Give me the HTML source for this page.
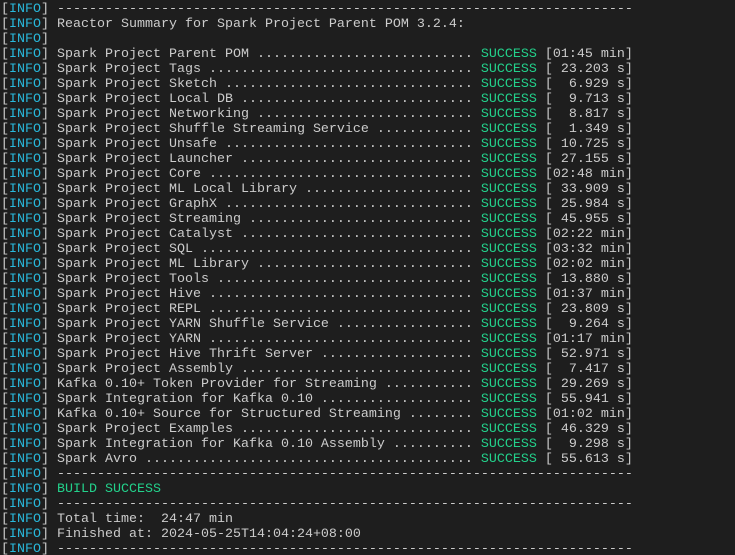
<!DOCTYPE html>
<html><head><meta charset="utf-8"><style>
html,body{margin:0;padding:0;background:#1e1e1e;width:735px;height:555px;overflow:hidden}
pre{margin:0;padding:2px 0 0 1px;font-family:"Liberation Mono",monospace;font-size:13.33px;line-height:15px;color:#cccccc;white-space:pre}
.i{color:#29b8db}.g{color:#23d18b}
</style></head><body><pre>[<span class="i">INFO</span>] ------------------------------------------------------------------------
[<span class="i">INFO</span>] Reactor Summary for Spark Project Parent POM 3.2.4:
[<span class="i">INFO</span>]
[<span class="i">INFO</span>] Spark Project Parent POM ........................... <span class="g">SUCCESS</span> [01:45 min]
[<span class="i">INFO</span>] Spark Project Tags ................................. <span class="g">SUCCESS</span> [ 23.203 s]
[<span class="i">INFO</span>] Spark Project Sketch ............................... <span class="g">SUCCESS</span> [  6.929 s]
[<span class="i">INFO</span>] Spark Project Local DB ............................. <span class="g">SUCCESS</span> [  9.713 s]
[<span class="i">INFO</span>] Spark Project Networking ........................... <span class="g">SUCCESS</span> [  8.817 s]
[<span class="i">INFO</span>] Spark Project Shuffle Streaming Service ............ <span class="g">SUCCESS</span> [  1.349 s]
[<span class="i">INFO</span>] Spark Project Unsafe ............................... <span class="g">SUCCESS</span> [ 10.725 s]
[<span class="i">INFO</span>] Spark Project Launcher ............................. <span class="g">SUCCESS</span> [ 27.155 s]
[<span class="i">INFO</span>] Spark Project Core ................................. <span class="g">SUCCESS</span> [02:48 min]
[<span class="i">INFO</span>] Spark Project ML Local Library ..................... <span class="g">SUCCESS</span> [ 33.909 s]
[<span class="i">INFO</span>] Spark Project GraphX ............................... <span class="g">SUCCESS</span> [ 25.984 s]
[<span class="i">INFO</span>] Spark Project Streaming ............................ <span class="g">SUCCESS</span> [ 45.955 s]
[<span class="i">INFO</span>] Spark Project Catalyst ............................. <span class="g">SUCCESS</span> [02:22 min]
[<span class="i">INFO</span>] Spark Project SQL .................................. <span class="g">SUCCESS</span> [03:32 min]
[<span class="i">INFO</span>] Spark Project ML Library ........................... <span class="g">SUCCESS</span> [02:02 min]
[<span class="i">INFO</span>] Spark Project Tools ................................ <span class="g">SUCCESS</span> [ 13.880 s]
[<span class="i">INFO</span>] Spark Project Hive ................................. <span class="g">SUCCESS</span> [01:37 min]
[<span class="i">INFO</span>] Spark Project REPL ................................. <span class="g">SUCCESS</span> [ 23.809 s]
[<span class="i">INFO</span>] Spark Project YARN Shuffle Service ................. <span class="g">SUCCESS</span> [  9.264 s]
[<span class="i">INFO</span>] Spark Project YARN ................................. <span class="g">SUCCESS</span> [01:17 min]
[<span class="i">INFO</span>] Spark Project Hive Thrift Server ................... <span class="g">SUCCESS</span> [ 52.971 s]
[<span class="i">INFO</span>] Spark Project Assembly ............................. <span class="g">SUCCESS</span> [  7.417 s]
[<span class="i">INFO</span>] Kafka 0.10+ Token Provider for Streaming ........... <span class="g">SUCCESS</span> [ 29.269 s]
[<span class="i">INFO</span>] Spark Integration for Kafka 0.10 ................... <span class="g">SUCCESS</span> [ 55.941 s]
[<span class="i">INFO</span>] Kafka 0.10+ Source for Structured Streaming ........ <span class="g">SUCCESS</span> [01:02 min]
[<span class="i">INFO</span>] Spark Project Examples ............................. <span class="g">SUCCESS</span> [ 46.329 s]
[<span class="i">INFO</span>] Spark Integration for Kafka 0.10 Assembly .......... <span class="g">SUCCESS</span> [  9.298 s]
[<span class="i">INFO</span>] Spark Avro ......................................... <span class="g">SUCCESS</span> [ 55.613 s]
[<span class="i">INFO</span>] ------------------------------------------------------------------------
[<span class="i">INFO</span>] <span class="g">BUILD SUCCESS</span>
[<span class="i">INFO</span>] ------------------------------------------------------------------------
[<span class="i">INFO</span>] Total time:  24:47 min
[<span class="i">INFO</span>] Finished at: 2024-05-25T14:04:24+08:00
[<span class="i">INFO</span>] ------------------------------------------------------------------------
</pre></body></html>
